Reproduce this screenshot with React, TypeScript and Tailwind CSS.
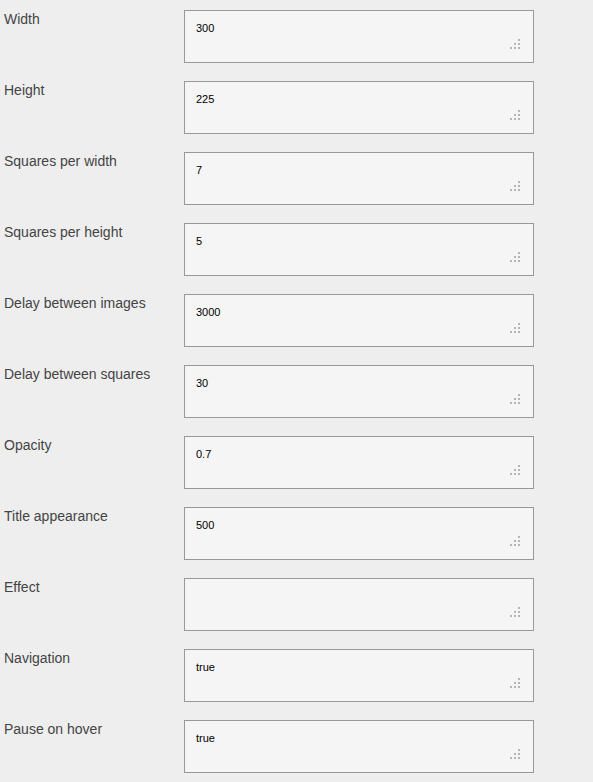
import React from 'react'

const fields: [string, string][] = [
  ['Width', '300'],
  ['Height', '225'],
  ['Squares per width', '7'],
  ['Squares per height', '5'],
  ['Delay between images', '3000'],
  ['Delay between squares', '30'],
  ['Opacity', '0.7'],
  ['Title appearance', '500'],
  ['Effect', ''],
  ['Navigation', 'true'],
  ['Pause on hover', 'true'],
]

// little dotted grip in the bottom right corner
const Grip = () => (
  <svg className="absolute right-[13px] bottom-[13px]" width="10" height="10" viewBox="0 0 10 10">
    <g fill="#b5b5b5">
      <rect x="8" y="0" width="2" height="2" />
      <rect x="4" y="4" width="2" height="2" />
      <rect x="8" y="4" width="2" height="2" />
      <rect x="0" y="8" width="2" height="2" />
      <rect x="4" y="8" width="2" height="2" />
      <rect x="8" y="8" width="2" height="2" />
    </g>
  </svg>
)

const App: React.FC = () => {
  return (
    <div className="min-h-[782px] bg-[#eeeeee] pt-[10px] font-['Liberation_Sans',Arial,sans-serif]">
      <div className="flex flex-col gap-[18px]">
        {fields.map(([label, value]) => (
          <div key={label} className="flex">
            <div className="w-[184px] pl-[4px] pt-[1px] text-[14px] leading-[16px] text-[#444]">{label}</div>
            <div className="relative w-[350px] h-[53px] border border-[#999] bg-[#f5f5f5] px-[11px] pt-[10px] text-[11px] leading-[14px] text-black">
              {value}
              <Grip />
            </div>
          </div>
        ))}
      </div>
    </div>
  )
}

export default App
